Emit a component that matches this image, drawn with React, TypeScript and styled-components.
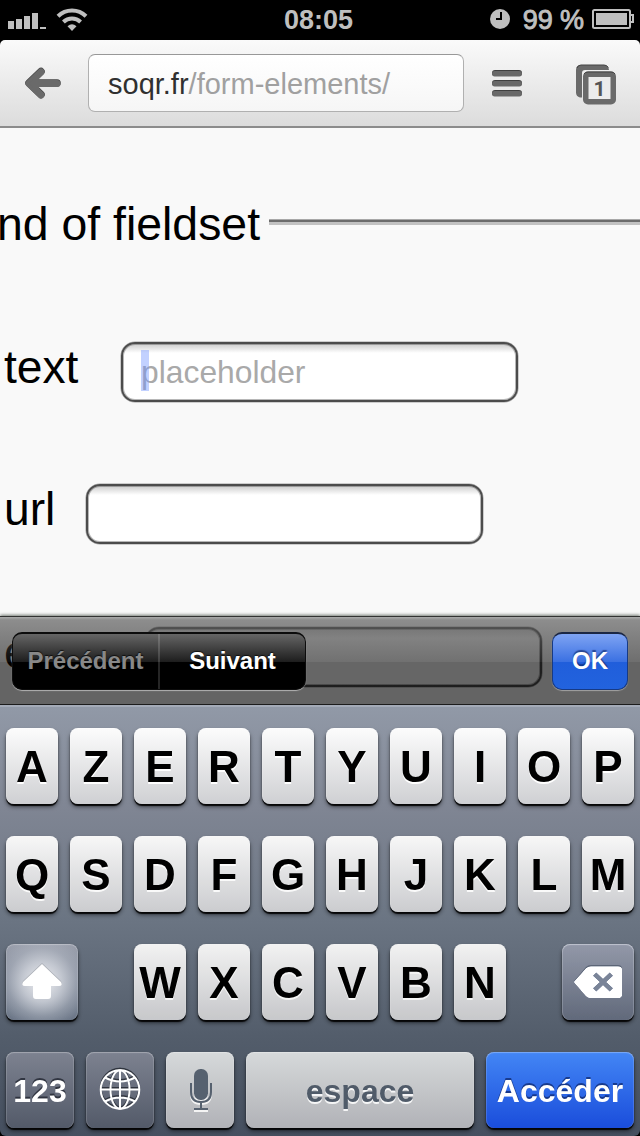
import React from 'react';
import styled, { createGlobalStyle, css } from 'styled-components';

const GlobalStyle = createGlobalStyle`
  * { box-sizing: border-box; }
  body {
    margin: 0;
    background: #000;
    font-family: "Liberation Sans", Helvetica, Arial, sans-serif;
    -webkit-font-smoothing: antialiased;
  }
`;

const Screen = styled.div`
  display: flex;
  flex-direction: column;
  width: 640px;
  height: 1136px;
  overflow: hidden;
  background: #000;
`;

/* ---------- status bar ---------- */

const StatusBar = styled.header`
  display: grid;
  grid-template-columns: 1fr auto 1fr;
  align-items: center;
  height: 40px;
  padding: 0 6px 0 8px;
  color: #bfbfbf;
  font-size: 27px;
  font-weight: bold;
  line-height: 40px;
`;

const StatusGroup = styled.div<{ $end?: boolean }>`
  display: flex;
  align-items: center;
  justify-content: ${(p) => (p.$end ? 'flex-end' : 'flex-start')};
  height: 40px;
`;

const Clock = styled.span`
  margin: 0 5px 0 0;
`;

const Percent = styled.span`
  margin: 0 8px 0 13px;
  font-weight: normal;
  font-size: 27px;
  letter-spacing: -0.1px;
  -webkit-text-stroke: 0.9px #bfbfbf;
  white-space: pre;
`;

/* ---------- browser bar ---------- */

const BrowserBar = styled.nav`
  display: flex;
  align-items: center;
  flex: none;
  height: 88px;
  padding: 0 23px 0 24px;
  border-bottom: 2px solid #8c8c8c;
  border-radius: 5px 5px 0 0;
  background: linear-gradient(#fafafa, #dcdcdc);
`;

const UrlField = styled.div`
  width: 376px;
  height: 58px;
  margin: 0 28px 0 27px;
  padding-left: 19px;
  border: 1px solid #b0b0b0;
  border-top-color: #989898;
  border-radius: 7px;
  background: linear-gradient(#fff, #f6f6f6);
  color: #303030;
  font-size: 29px;
  line-height: 59px;
  white-space: nowrap;
`;

const UrlPath = styled.span`
  color: #a0a0a0;
`;

const TabsSlot = styled.div`
  display: flex;
  margin-left: auto;
`;

/* ---------- page ---------- */

const Viewport = styled.div`
  position: relative;
  flex: none;
  height: 577px;
  overflow: hidden;
  background: #f9f9f9;
`;

const Legend = styled.div`
  display: flex;
  align-items: flex-start;
  height: 53px;
  margin: 70px 0 0 -3px;
  font-size: 46.4px;
  line-height: 53px;
  white-space: nowrap;
`;

const Rule = styled.div`
  flex: 1;
  height: 6px;
  margin: 21px 0 0 9px;
  border-top: 1px solid #a8a8a8;
  border-bottom: 3px solid #c2c2c2;
  background: #6c6c6c;
`;

const FieldRow = styled.div<{ $top: number }>`
  display: flex;
  align-items: flex-start;
  height: 61px;
  margin-top: ${(p) => p.$top}px;
  padding-left: 4px;
`;

const Label = styled.label<{ $gap: number }>`
  margin: -1px ${(p) => p.$gap}px 0 0;
  font-size: 46.2px;
  line-height: 53px;
`;

const Field = styled.div`
  width: 397px;
  height: 60px;
  padding: 6px 0 0 18px;
  border: 2px solid #4c4c4c;
  border-radius: 14px;
  background: linear-gradient(#cdcdcd, #fff 9px);
  box-shadow: 0 0 0 0.5px rgba(76, 76, 76, 0.5), inset 0 0 0 1px rgba(76, 76, 76, 0.4);
  color: #a9a9a9;
  font-size: 31.8px;
  line-height: 45px;
`;

const Caret = styled.span`
  display: inline-block;
  width: 8px;
  height: 41px;
  margin-right: -8px;
  vertical-align: top;
  background: rgba(110, 145, 255, 0.42);
  position: relative;
`;

/* ---------- form accessory ---------- */

const Accessory = styled.div`
  position: absolute;
  left: 0;
  right: 0;
  bottom: 0;
  display: flex;
  align-items: flex-start;
  justify-content: space-between;
  height: 89px;
  padding: 15px 12px 0;
  border-top: 1px solid #333;
  border-bottom: 1px solid #1c1c1c;
  background:
    linear-gradient(rgba(255, 255, 255, 0.25), rgba(255, 255, 255, 0) 3px),
    linear-gradient(rgba(98, 98, 98, 0.7), rgba(18, 18, 18, 0.6) 45px, rgba(0, 0, 0, 0.6) 45px);
  box-shadow: 0 -1px 3px rgba(40, 50, 40, 0.65);
`;

const Segments = styled.div`
  display: flex;
  width: 294px;
  height: 58px;
  overflow: hidden;
  border: 1px solid #0c0c0c;
  border-top-width: 2px;
  border-radius: 10px;
  background: linear-gradient(#666, #1d1d1d 28px, #000 28px);
  box-shadow: 0 1px 1px rgba(255, 255, 255, 0.5);
`;

const Segment = styled.button<{ $disabled?: boolean }>`
  flex: 1;
  padding: 0 0 1px;
  border: 0;
  border-right: ${(p) => (p.$disabled ? '2px solid rgba(255,255,255,0.15)' : '0')};
  background: none;
  color: ${(p) => (p.$disabled ? '#888' : '#fff')};
  font: bold 24px "Liberation Sans", Helvetica, sans-serif;
  text-shadow: 0 -1px 1px rgba(0, 0, 0, 0.7);
`;

const OkButton = styled.button`
  width: 76px;
  height: 58px;
  padding: 0 0 1px;
  border: 1px solid #163a86;
  border-top: 2px solid #1b2744;
  border-radius: 10px;
  background: linear-gradient(#7fa4f3, #3a70e2 28px, #205edb 28px, #2263de);
  box-shadow: 0 1px 1px rgba(255, 255, 255, 0.4);
  color: #fff;
  font: bold 24px "Liberation Sans", Helvetica, sans-serif;
  text-shadow: 0 -2px 1px rgba(10, 30, 90, 0.6);
`;

/* ---------- keyboard ---------- */

const KeyboardPanel = styled.section`
  display: flex;
  flex-direction: column;
  gap: 32px;
  flex: none;
  height: 431px;
  padding: 21px 6px 0;
  border-top: 2px solid #a4abb8;
  border-radius: 0 0 6px 6px;
  background: linear-gradient(#9199a7, #7f8593 24%, #6c7684 48%, #525c6a 78%, #454f5f);
`;

const KeyRow = styled.div`
  display: flex;
  gap: 12px;
`;

type KeyTone = 'light' | 'dark' | 'shift' | 'soft' | 'go';

const tones = {
  light: css`
    background: linear-gradient(#fcfcfc, #cfd0d3);
    color: #000;
    text-shadow: 0 2px 0 #fff;
  `,
  dark: css`
    background: linear-gradient(#7d8290, #535a69);
    color: #fff;
    text-shadow: 0 -2px 0 rgba(30, 34, 44, 0.75);
  `,
  shift: css`
    background:
      radial-gradient(circle at 50% 50%, #e0e2e7 12%, rgba(205, 209, 217, 0.85) 38%, rgba(180, 186, 197, 0.45) 65%, rgba(160, 167, 180, 0) 90%),
      linear-gradient(#9a9fac, #6b7687);
    color: #fff;
  `,
  soft: css`
    background: linear-gradient(#d6d9da, #b1b2b7);
    color: #505b69;
    text-shadow: 0 2px 0 rgba(255, 255, 255, 0.85);
  `,
  go: css`
    background: linear-gradient(#4386f5, #1a4ddb);
    color: #fff;
    text-shadow: 0 -2px 0 rgba(10, 30, 90, 0.65);
  `,
};

const Key = styled.button<{ $tone?: KeyTone; $w?: number; $shade?: number }>`
  display: flex;
  align-items: center;
  justify-content: center;
  flex: none;
  width: ${(p) => p.$w ?? 52}px;
  height: 76px;
  padding: 0;
  border: 0;
  border-radius: 8px;
  font: bold ${(p) => (p.$tone ? 32 : 44)}px/76px "Liberation Sans", Helvetica, sans-serif;
  ${(p) => tones[p.$tone ?? 'light']}
  filter: brightness(${(p) => 1 - (p.$shade ?? 0)});
  box-shadow:
    0 2px 1px rgba(0, 0, 0, 0.9),
    0 3px 4px rgba(0, 0, 0, 0.5),
    inset 0 1px 1px rgba(255, 255, 255, 0.3),
    inset 1px 0 0 rgba(255, 255, 255, 0.12),
    inset -1px 0 0 rgba(255, 255, 255, 0.12);
`;

const KeySpacer = styled.span`
  width: 32px;
`;

const Glyph = styled.span`
  display: block;
  margin-top: 2px;
`;

/* ---------- icons ---------- */

const SignalIcon = () => (
  <svg width="38" height="40" fill="#bfbfbf">
    <path d="M0 21h6v8H0zM8 19h6v10H8zM16 16h6v13h-6zM24 13h6v16h-6zM32 27h6v2h-6z" />
  </svg>
);

const WifiSvg = styled.svg`
  margin-left: 10px;
`;

const WifiIcon = () => (
  <WifiSvg width="32" height="40" fill="none" stroke="#bfbfbf" strokeWidth="4">
    <path d="M2 16.300A20 20 0 0 1 30 16.300" />
    <path d="M7.400 22A12.300 12.300 0 0 1 24.600 22" />
    <path d="M11.500 26.300Q16 22 20.500 26.300L16 31z" fill="#bfbfbf" stroke="none" />
  </WifiSvg>
);

const AlarmIcon = () => (
  <svg width="20" height="40">
    <circle cx="10" cy="19" r="10" fill="#bfbfbf" />
    <path d="M11 12v7H6" fill="none" stroke="#000" strokeWidth="2" />
  </svg>
);

const BatteryIcon = () => (
  <svg width="42" height="40" fill="none" stroke="#bfbfbf" strokeWidth="2">
    <rect x="1" y="10" width="37" height="18" rx="1.500" />
    <rect x="4" y="13" width="31" height="12" fill="#bfbfbf" stroke="none" />
    <path d="M38 15h3v7h-3" />
  </svg>
);

const BackIcon = () => (
  <svg width="37" height="38" fill="none" strokeLinecap="round" strokeLinejoin="round">
    <path d="M17 7.500L5 19L17 30.500M6 19H33" stroke="#444" strokeWidth="7.500" />
    <path d="M17 8L5 19.500L17 31M6 19.500H33" stroke="#6a6a6a" strokeWidth="7" />
    <path d="M5 19.500L15 10V29Z" fill="#6a6a6a" />
  </svg>
);

const MenuIcon = () => (
  <svg width="30" height="28">
    {[1, 11, 21].map((y) => (
      <g key={y}>
        <rect x="0" y={y} width="30" height="6" rx="3" fill="#3f3f3f" />
        <rect x="0" y={y + 1} width="30" height="5.500" rx="2.700" fill="#686868" />
      </g>
    ))}
  </svg>
);

const TabsText = styled.text`
  font: bold 21px Roboto, "Liberation Sans", sans-serif;
  fill: #555;
`;

const TabsIcon = () => (
  <svg width="42" height="44" viewBox="0 -2 42 44">
    <path d="M7 34.500H5Q1 33.500 1 29.500V7Q1 2 6 2H29Q33.500 2 34 7H10Q7 7 7 10Z" fill="#6a6a6a" />
    <path d="M2 5Q3 2 6 2H29Q32 2 33.300 4.500" fill="none" stroke="#444" />
    <rect x="8" y="8.500" width="33" height="33" rx="5" fill="#6a6a6a" />
    <rect x="13.500" y="14" width="22" height="22" fill="#ececec" />
    <path d="M9 11Q10 9 13 9H36Q39 9 40 11" fill="none" stroke="#444" />
    <TabsText x="18.500" y="32.500">1</TabsText>
  </svg>
);

const ShiftIcon = () => (
  <svg width="42" height="40">
    <path d="M21 1L40 19Q42 23 38 23H30V33Q30 36 27 36H15Q12 36 12 33V23H4Q0 23 2 19Z" fill="#a9adb5" />
    <path d="M21 2L40 20Q42 24 38 24H30V34Q30 37 27 37H15Q12 37 12 34V24H4Q0 24 2 20Z" fill="#fff" />
  </svg>
);

const DeleteIcon = () => (
  <svg width="50" height="36">
    <path d="M18 1H45Q49 1 49 5V29Q49 33 45 33H18Q15 33 13 31L1 17L13 3Q15 1 18 1Z" fill="#4e5665" />
    <path d="M18 2.500H45Q49 2.500 49 6V30Q49 34 45 34H18Q15 34 13 32L1 18L13 4.500Q15 2.500 18 2.500Z" fill="#fff" />
    <path d="M21.500 10L38.500 26M38.500 10L21.500 26" stroke="#687182" strokeWidth="5" />
  </svg>
);

const GlobeLines = ({ stroke }: { stroke: string }) => (
  <g fill="none" stroke={stroke} strokeWidth="2">
    <circle cx="21" cy="21" r="19.300" />
    <ellipse cx="21" cy="21" rx="9.500" ry="19.300" />
    <path d="M21 1.700V40.300M1.700 21H40.300M6 9Q21 17 36 9M6 33Q21 25 36 33" />
  </g>
);

const GlobeIcon = () => (
  <svg width="42" height="46">
    <GlobeLines stroke="#30353f" />
    <g transform="translate(0 1.500)">
      <GlobeLines stroke="#fff" />
    </g>
  </svg>
);

const MicShape = ({ color }: { color: string }) => (
  <g>
    <rect x="6" y="0" width="14" height="31" rx="6.500" fill={color} />
    <path d="M3 14V23Q3 33 13 33Q23 33 23 23V14M13 33V40M6 40H20" fill="none" stroke={color} strokeWidth="2" />
  </g>
);

const MicIcon = () => (
  <svg width="25" height="44" viewBox="0 -1 25 44">
    <g transform="translate(0 2)">
      <MicShape color="#f4f4f4" />
    </g>
    <MicShape color="#56616f" />
  </svg>
);

/* ---------- screen ---------- */

const letters = (row: string, shade: number) =>
  row.split('').map((c) => (
    <Key key={c} $shade={shade}>
      <Glyph>{c}</Glyph>
    </Key>
  ));

export default function App() {
  return (
    <Screen>
      <GlobalStyle />
      <StatusBar>
        <StatusGroup>
          <SignalIcon />
          <WifiIcon />
        </StatusGroup>
        <Clock>08:05</Clock>
        <StatusGroup $end>
          <AlarmIcon />
          <Percent>99 %</Percent>
          <BatteryIcon />
        </StatusGroup>
      </StatusBar>

      <BrowserBar>
        <BackIcon />
        <UrlField>
          soqr.fr<UrlPath>/form-elements/</UrlPath>
        </UrlField>
        <MenuIcon />
        <TabsSlot>
          <TabsIcon />
        </TabsSlot>
      </BrowserBar>

      <Viewport>
        <Legend>
          nd of fieldset
          <Rule />
        </Legend>
        <FieldRow $top={91}>
          <Label $gap={42.6}>text</Label>
          <Field>
            <Caret />
            placeholder
          </Field>
        </FieldRow>
        <FieldRow $top={81}>
          <Label $gap={30.6}>url</Label>
          <Field />
        </FieldRow>
        <FieldRow $top={82}>
          <Label $gap={30.6}>email</Label>
          <Field />
        </FieldRow>
        <Accessory>
          <Segments>
            <Segment $disabled>Précédent</Segment>
            <Segment>Suivant</Segment>
          </Segments>
          <OkButton>OK</OkButton>
        </Accessory>
      </Viewport>

      <KeyboardPanel>
        <KeyRow>{letters('AZERTYUIOP', 0)}</KeyRow>
        <KeyRow>{letters('QSDFGHJKLM', 0.02)}</KeyRow>
        <KeyRow>
          <Key $tone="shift" $w={72}>
            <ShiftIcon />
          </Key>
          <KeySpacer />
          {letters('WXCVBN', 0.04)}
          <KeySpacer />
          <Key $tone="dark" $w={72} $shade={-0.17}>
            <DeleteIcon />
          </Key>
        </KeyRow>
        <KeyRow>
          <Key $tone="dark" $w={68}>
            <Glyph>123</Glyph>
          </Key>
          <Key $tone="dark" $w={68}>
            <GlobeIcon />
          </Key>
          <Key $tone="soft" $w={68}>
            <MicIcon />
          </Key>
          <Key $tone="soft" $w={228}>
            <Glyph>espace</Glyph>
          </Key>
          <Key $tone="go" $w={148}>
            <Glyph>Accéder</Glyph>
          </Key>
        </KeyRow>
      </KeyboardPanel>
    </Screen>
  );
}
